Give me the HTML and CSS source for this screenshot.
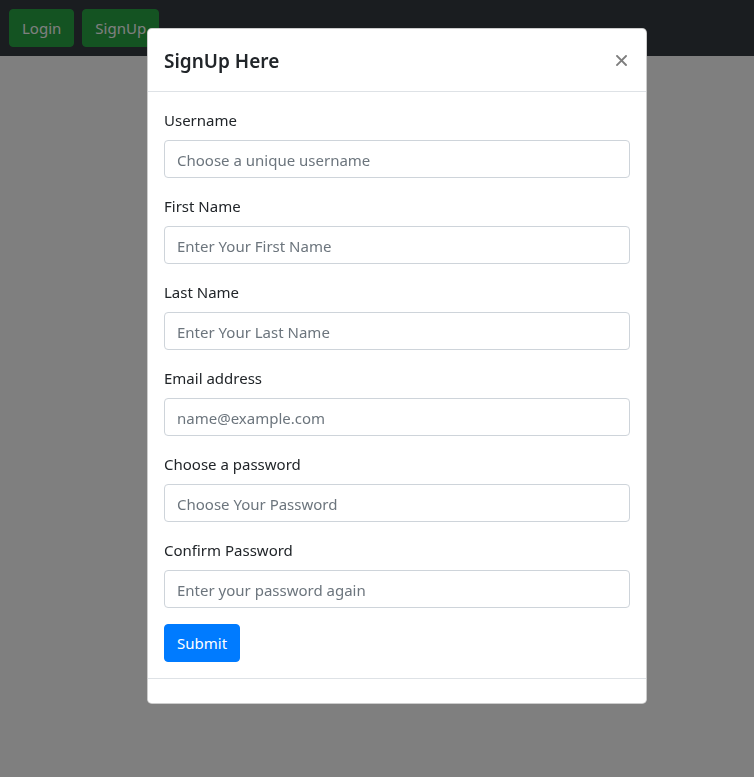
FILE: index.html
```html
<!DOCTYPE html>
<html lang="en">
<head>
<meta charset="utf-8">
<title>SignUp</title>
<link rel="stylesheet" href="styles.css">
</head>
<body>
<nav class="navbar">
  <button class="btn btn-success">Login</button>
  <button class="btn btn-success">SignUp</button>
</nav>
<div class="backdrop"></div>
<div class="modal">
  <div class="modal-dialog">
    <div class="modal-content">
      <div class="modal-header">
        <h5 class="modal-title">SignUp Here</h5>
        <button class="close" type="button" aria-label="Close">
          <svg width="11" height="11" viewBox="0 0 11 11" aria-hidden="true"><path d="M1 1 L10 10 M10 1 L1 10" stroke="currentColor" stroke-width="1.9" stroke-linecap="square" fill="none"/></svg>
        </button>
      </div>
      <div class="modal-body">
        <form>
          <div class="form-group">
            <label>Username</label>
            <input class="form-control" type="text" placeholder="Choose a unique username">
          </div>
          <div class="form-group">
            <label>First Name</label>
            <input class="form-control" type="text" placeholder="Enter Your First Name">
          </div>
          <div class="form-group">
            <label>Last Name</label>
            <input class="form-control" type="text" placeholder="Enter Your Last Name">
          </div>
          <div class="form-group">
            <label>Email address</label>
            <input class="form-control" type="email" placeholder="name@example.com">
          </div>
          <div class="form-group">
            <label>Choose a password</label>
            <input class="form-control" type="password" placeholder="Choose Your Password">
          </div>
          <div class="form-group">
            <label>Confirm Password</label>
            <input class="form-control" type="password" placeholder="Enter your password again">
          </div>
          <button class="btn btn-primary" type="submit">Submit</button>
        </form>
      </div>
      <div class="modal-footer"></div>
    </div>
  </div>
</div>
</body>
</html>
```
FILE: styles.css
```css
* { box-sizing: border-box; }
html, body { height: 100%; }
body {
  margin: 0;
  font-family: "Noto Sans", "Open Sans", sans-serif;
  font-size: 15px;
  line-height: 24px;
  color: #212529;
  background: #fff;
}
.navbar {
  background: #343a40;
  height: 56px;
  display: flex;
  align-items: center;
  gap: 8px;
  padding: 0 9px;
}
.btn {
  font-family: inherit;
  font-size: 15px;
  line-height: 24px;
  padding: 6px 12px;
  border: 1px solid transparent;
  border-radius: 4px;
  color: #fff;
  cursor: pointer;
}
.btn-success { background: #28a745; border-color: #28a745; }
.btn-primary { background: #007bff; border-color: #007bff; }
.backdrop {
  position: fixed;
  inset: 0;
  background: rgba(0, 0, 0, 0.5);
}
.modal {
  position: fixed;
  inset: 0;
}
.modal-dialog {
  width: 500px;
  margin: 28px 0 0 147px;
}
.modal-content {
  background: #fff;
  border: 1px solid rgba(0, 0, 0, 0.2);
  border-radius: 4.8px;
}
.modal-header {
  display: flex;
  align-items: flex-start;
  justify-content: space-between;
  height: 63px;
  padding: 17px 16px 15px;
  border-bottom: 1px solid #dee2e6;
}
.modal-title {
  margin: 0;
  font-size: 19px;
  font-weight: 600;
  line-height: 30px;
}
.close {
  display: block;
  background: none;
  border: 0;
  padding: 0;
  margin: 9px 3px 0 0;
  line-height: 0;
  color: #000;
  opacity: 0.5;
  cursor: pointer;
}
.close svg { display: block; }
.modal-body { padding: 16px; }
.form-group { margin-bottom: 16px; }
label {
  display: inline-block;
  margin-bottom: 8px;
}
.form-control {
  display: block;
  width: 100%;
  height: 38px;
  padding: 7px 12px 5px;
  font-family: inherit;
  font-size: 15px;
  line-height: 24px;
  color: #495057;
  background: #fff;
  border: 1px solid #ced4da;
  border-radius: 4px;
}
.form-control::placeholder { color: #6c757d; opacity: 1; }
.modal-footer {
  border-top: 1px solid #dee2e6;
  padding: 12px;
  height: 25px;
}
```
